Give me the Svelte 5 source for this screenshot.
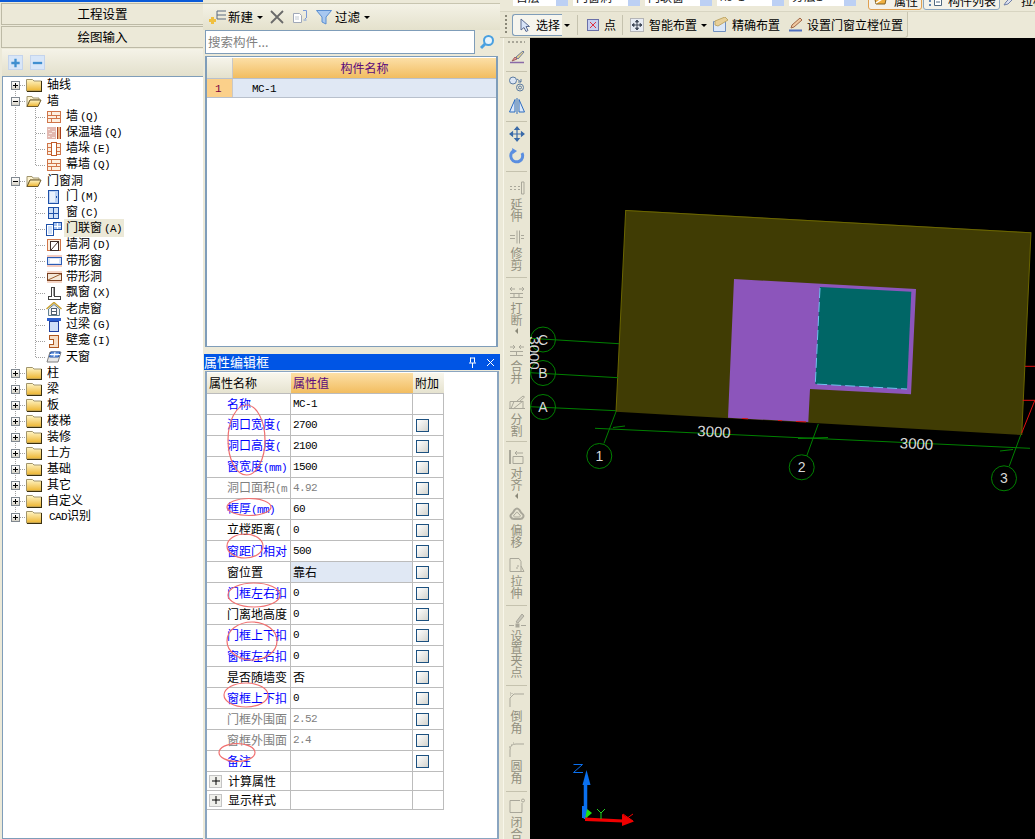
<script>
  const tree = [
    { label: '轴线', box: '+' },
    { label: '墙', box: '-', open: true },
    { label: '墙(Q)', icon: 'brick' },
    { label: '保温墙(Q)', icon: 'insul' },
    { label: '墙垛(E)', icon: 'pier' },
    { label: '幕墙(Q)', icon: 'brick' },
    { label: '门窗洞', box: '-', open: true },
    { label: '门(M)', icon: 'door' },
    { label: '窗(C)', icon: 'window' },
    { label: '门联窗(A)', icon: 'doorwin', active: true },
    { label: '墙洞(D)', icon: 'hole' },
    { label: '带形窗', icon: 'band' },
    { label: '带形洞', icon: 'bandhole' },
    { label: '飘窗(X)', icon: 'bay' },
    { label: '老虎窗', icon: 'dormer' },
    { label: '过梁(G)', icon: 'lintel' },
    { label: '壁龛(I)', icon: 'niche' },
    { label: '天窗', icon: 'sky' },
    { label: '柱', box: '+' },
    { label: '梁', box: '+' },
    { label: '板', box: '+' },
    { label: '楼梯', box: '+' },
    { label: '装修', box: '+' },
    { label: '土方', box: '+' },
    { label: '基础', box: '+' },
    { label: '其它', box: '+' },
    { label: '自定义', box: '+' },
    { label: 'CAD识别', box: '+' }
  ];

  const props = [
    { name: '名称', value: 'MC-1', kind: 'blue', nocheck: true },
    { name: '洞口宽度(', value: '2700', kind: 'blue' },
    { name: '洞口高度(', value: '2100', kind: 'blue' },
    { name: '窗宽度(mm)', value: '1500', kind: 'blue' },
    { name: '洞口面积(m', value: '4.92', kind: 'gray' },
    { name: '框厚(mm)', value: '60', kind: 'blue' },
    { name: '立樘距离(', value: '0', kind: 'black' },
    { name: '窗距门相对', value: '500', kind: 'blue' },
    { name: '窗位置', value: '靠右', kind: 'black', picked: true },
    { name: '门框左右扣', value: '0', kind: 'blue' },
    { name: '门离地高度', value: '0', kind: 'black' },
    { name: '门框上下扣', value: '0', kind: 'blue' },
    { name: '窗框左右扣', value: '0', kind: 'blue' },
    { name: '是否随墙变', value: '否', kind: 'black' },
    { name: '窗框上下扣', value: '0', kind: 'blue' },
    { name: '门框外围面', value: '2.52', kind: 'gray' },
    { name: '窗框外围面', value: '2.4', kind: 'gray' },
    { name: '备注', value: '', kind: 'blue' }
  ];

  const sideTools = [
    { icon: 'brush', h: 21 },
    { sep: true },
    { icon: 'circles', h: 24, pt: 3 },
    { icon: 'mirror', h: 23, pt: 1 },
    { sep: true },
    { icon: 'move', h: 23, pt: 3 },
    { icon: 'rotate', h: 24, pt: 2 },
    { sep: true },
    { icon: 'extend', text: '延伸', h: 56, pt: 7 },
    { icon: 'trim', text: '修剪', h: 47 },
    { sep: true },
    { icon: 'break', text: '打断', h: 63, pt: 5, more: true },
    { icon: 'merge', text: '合并', h: 53 },
    { icon: 'split', text: '分割', h: 45 },
    { sep: true },
    { icon: 'align', text: '对齐', h: 63, pt: 6, more: true },
    { icon: 'offset', text: '偏移', h: 51 },
    { icon: 'stretch', text: '拉伸', h: 47 },
    { sep: true },
    { icon: 'grip', text: '设置夹点', h: 77, pt: 5 },
    { sep: true },
    { icon: 'chamfer', text: '倒角', h: 55, pt: 5 },
    { icon: 'fillet', text: '圆角', h: 48 },
    { sep: true },
    { icon: 'close', text: '闭合', h: 46, pt: 5 }
  ];

  const marks = [
    [246.5, 440, 18.5, 35],
    [249, 507, 22, 8.5],
    [245, 546, 18, 12],
    [254, 595, 26, 12],
    [252, 641, 25, 19],
    [246, 695, 22, 12],
    [237, 752.5, 18, 9]
  ];

  const bubbles = [
    ['C', 543, 339.5], ['B', 543, 373], ['A', 543, 407],
    ['1', 599.3, 456], ['2', 801.7, 467.3], ['3', 1004, 478.3]
  ];

  const grid = [
    [530, 338.3, 619, 343.7], [530, 372.7, 618, 377.7], [530, 406.7, 616, 410.7],
    [616, 411.7, 604, 443.3], [818.3, 424, 806.7, 456], [1020.7, 435, 1009.3, 466],
    [595, 428.3, 1030, 448.3], [613, 427.5, 625, 426], [798, 438.5, 828, 437.5], [1000, 451, 1013, 449.5]
  ];

  const combos = ['首层', '门窗洞', '门联窗', 'MC-1', '分层1'];

  // split a label so that latin runs get the narrow mono face
  function runs(text) {
    return text.match(/[\x00-\x7f]+|[^\x00-\x7f]+/g) || [];
  }
  const isLatin = (r) => r.charCodeAt(0) < 128;
</script>

{#snippet txt(text)}{#each runs(text) as r}{#if isLatin(r)}<span class="lat">{r}</span>{:else}{r}{/if}{/each}{/snippet}

{#snippet folder(open)}
  <svg class="ti" width="16" height="14" viewBox="0 0 16 14">
    <defs><linearGradient id="fld" x1="0" y1="0" x2="0" y2="1"><stop offset="0" stop-color="#fff6c8" /><stop offset="1" stop-color="#edb42e" /></linearGradient></defs>
    {#if open}
      <path d="M1 2.500h5l1 1.500h6v2H4L1 12.500z" fill="#fdf3cf" stroke="#a0946c" />
      <path d="M1 12.500L4 6h11l-3 6.500z" fill="url(#fld)" stroke="#6e5a28" />
    {:else}
      <path d="M.5 3V1.500h6L8 3h7.500v10H.5z" fill="url(#fld)" stroke="#a0946c" />
      <path d="M1 13.500h15M15.500 3v10.500" stroke="#3a3010" />
    {/if}
  </svg>
{/snippet}

{#snippet treeIcon(k)}
  <svg class="ti" width="16" height="14" viewBox="0 0 16 14" shape-rendering="crispEdges">
    {#if k === 'brick'}
      <rect x="1.500" y="1.500" width="13" height="11" fill="#fdf0e0" stroke="#d0764a" />
      <path d="M1 5h14M1 8.500h14M5.500 1v4M10.500 5v3.500M5.500 8.500v4" stroke="#d0764a" />
    {:else if k === 'insul'}
      <rect x="1" y="1" width="9" height="12" fill="#e2b8b0" />
      <path d="M2 3h2M6 5h3M3 7h3M2 10h2M6 11h3" stroke="#f6e8e0" />
      <path d="M11.500 1v12M14.500 1v12" stroke="#a8401c" /><rect x="12" y="1" width="2" height="12" fill="#e8b080" />
    {:else if k === 'pier'}
      <rect x="1.500" y="1.500" width="13" height="11" fill="#fdf0e0" stroke="#d0764a" />
      <rect x="5.500" y="0.500" width="5" height="13" fill="#fff" stroke="#c05a28" />
      <path d="M1 5h4M1 9h4M11 5h4M11 9h4" stroke="#d0764a" />
    {:else if k === 'door'}
      <rect x="2.500" y="0.500" width="10" height="13" fill="#bcd2f4" stroke="#1e50a8" />
      <rect x="4" y="2" width="5" height="10" fill="#e8f0fc" /><rect x="10" y="6" width="1" height="2" fill="#1e50a8" />
    {:else if k === 'window'}
      <rect x="2.500" y="1.500" width="10" height="11" fill="#cfe0f8" stroke="#1e50a8" />
      <path d="M7.500 1v11M2 7.500h11" stroke="#1e50a8" />
    {:else if k === 'doorwin'}
      <rect x="0.500" y="2.500" width="7" height="11" fill="#fff" stroke="#1e50a8" />
      <rect x="2" y="4" width="4" height="8" fill="#cfe0f8" />
      <rect x="7.500" y="0.500" width="8" height="7" fill="#a8c4f0" stroke="#1e50a8" />
      <path d="M11.500 1v6M8 4h7" stroke="#fff" />
    {:else if k === 'hole'}
      <rect x="1.500" y="1.500" width="13" height="11" fill="#fdf0e0" stroke="#d0764a" />
      <rect x="4.500" y="3.500" width="8" height="9" fill="#fff" stroke="#40302a" />
      <path d="M5 12l7-8" stroke="#40302a" shape-rendering="auto" />
    {:else if k === 'band'}
      <rect x="1" y="1" width="15" height="12" fill="#f4ccc0" />
      <rect x="1.500" y="3.500" width="14" height="7" fill="#d8e4f8" stroke="#2c5cb4" />
      <rect x="4" y="5" width="9" height="4" fill="#fff" />
    {:else if k === 'bandhole'}
      <rect x="1" y="1" width="15" height="12" fill="#f4d4c4" />
      <rect x="1.500" y="3.500" width="14" height="7" fill="#f4e8d8" stroke="#7a4020" />
      <path d="M2 10l13-6" stroke="#a06030" shape-rendering="auto" />
    {:else if k === 'bay'}
      <path d="M5.500 1h3v9h6v3.500H2.500V10h3z" fill="#fff" stroke="#404040" />
      <path d="M7 2v8" stroke="#a0a0a0" />
    {:else if k === 'dormer'}
      <g shape-rendering="auto">
        <path d="M.5 7L8 .5 15.500 7" fill="none" stroke="#c8a030" stroke-width="1.500" />
        <path d="M2.500 7L8 2.500 13.500 7v6.500h-11z" fill="#f0f0f0" stroke="#608090" />
      </g>
      <rect x="5.500" y="6.500" width="5" height="6" fill="#fff" stroke="#506070" />
      <path d="M5 9.500h6" stroke="#506070" />
    {:else if k === 'lintel'}
      <rect x="1" y="0" width="14" height="3" fill="#2c60d0" />
      <rect x="3.500" y="3.500" width="9" height="10" fill="#d0e0f8" stroke="#2040a0" />
    {:else if k === 'niche'}
      <path d="M3 1.500h9.500v12H3V10h4V5H3z" fill="#f8e0c8" stroke="#b05820" />
    {:else}
      <g shape-rendering="auto">
        <path d="M4 2h11l-3 10H1z" fill="#e8e8e8" stroke="#808080" />
        <path d="M5 2h9l-1.500 5H3.500z" fill="#7ea8e8" stroke="#1e50a8" />
        <path d="M9 2l-1 5M4 4.500h10" stroke="#fff" />
      </g>
    {/if}
  </svg>
{/snippet}

{#snippet sideIcon(k)}
  <svg width="18" height="16" viewBox="0 0 18 16" fill="none" stroke="#a9a79a">
    {#if k === 'brush'}
      <path d="M2 13.500h14" stroke="#8a6aa8" stroke-width="1.500" />
      <path d="M4 12l3-4 2 2z" fill="#e8a0a0" stroke="#a06060" />
      <path d="M8 8l7-6 1 1-6 7z" fill="#e8d088" stroke="#6e7ea0" />
    {:else if k === 'circles'}
      <circle cx="5" cy="4.500" r="3.500" fill="#dce6f4" stroke="#5a7aa0" />
      <circle cx="12" cy="11.500" r="3.500" stroke="#5a7aa0" /><circle cx="12" cy="11.500" r="1.500" stroke="#5a7aa0" />
      <path d="M9 3l4 3M13 3v3h-3" stroke="#5a7aa0" />
    {:else if k === 'mirror'}
      <path d="M7 1.500L1.500 14H7zM11 1.500L16.500 14H11z" fill="#dce8f8" stroke="#2c6cc0" />
      <path d="M9 0v16" stroke="#2c6cc0" />
    {:else if k === 'move'}
      <path d="M9 1v14M2 8h14M9 1L7 3.500h4zM9 15l-2-2.500h4zM2 8l2.500-2v4zM16 8l-2.500-2v4z" fill="#5a86c0" stroke="#3a6aa8" stroke-width="1.200" />
    {:else if k === 'rotate'}
      <path d="M6 2.500A6 6 0 1 0 14 5" stroke="#5a8ee0" stroke-width="3" />
      <path d="M4 0l5 3-4 3z" fill="#5a8ee0" stroke="none" />
    {:else if k === 'extend'}
      <path d="M2 6.500h2M2 9.500h2M6 6.500h2M6 9.500h2M10 6.500h2M10 9.500h2M13.500 2v12h2.500V2z" />
    {:else if k === 'trim'}
      <path d="M2 6.500h5M2 9.500h5M9 1.500v13M11.500 1.500v13M13 6.500h3M13 9.500h3" />
    {:else if k === 'break'}
      <path d="M2 9.500h13M2 13.500h13M6 9.500v4M11 9.500v4M2 5h5M2 5l2-2M2 5l2 2M16 5h-5M16 5l-2-2M16 5l-2 2" />
    {:else if k === 'merge'}
      <path d="M2 9.500h13M2 13.500h13M8.500 9.500v4M2 5h5M7 5L5 3M7 5L5 7M16 5h-5M11 5l2-2M11 5l2 2" />
    {:else if k === 'split'}
      <path d="M1 13.500h16M2 6.500v7M2 6.500h13M6 6.500l-3 7M15 14V6l-10 8M9 6l6-5 1.500 1-5.500 5" />
    {:else if k === 'align'}
      <path d="M2 1v14" stroke-width="2" /><path d="M5 7.500h10v7H5zM7 4h8M7 4l2-2M7 4l2 2" />
    {:else if k === 'offset'}
      <path d="M9 2.500c3 0 3 4 5 5 3 2 1 5.500-2 5.500H6c-3 0-5-3.500-2-5.500 2-1 2-5 5-5z" stroke-width="2" />
      <path d="M9 6c1 0 1 2 3 3 1 1 0 2-1 2H7c-1 0-2-1-1-2 2-1 2-3 3-3z" />
    {:else if k === 'stretch'}
      <path d="M2 1.500h9l2 3v10H2zM13 9l3 5.500h-3M10 8v2M8 11h2" />
    {:else if k === 'grip'}
      <rect x="8" y="12" width="3" height="3" fill="#a9a79a" /><path d="M1 13.500h5M13 13.500h5" />
      <path d="M8 10l6-8 2 2-6 7z" fill="#c8c6ba" />
    {:else if k === 'chamfer'}
      <path d="M2 15V6l4-4h10" /><path d="M2 3h1M4 1v1M2 1h1" stroke-dasharray="1 1" />
    {:else if k === 'fillet'}
      <path d="M2 15V8q0-6 6-6h8" /><path d="M1 5h1M3 3h1M5 1h1" />
    {:else}
      <path d="M14 5v9.500H2v-12h10" /><circle cx="15" cy="2.500" r="1.500" />
    {/if}
  </svg>
{/snippet}

{#snippet arrow()}<i class="caret"></i>{/snippet}

<div class="app">
  <aside class="left">
    <div class="nav-btn">工程设置</div>
    <div class="nav-btn">绘图输入</div>
    <div class="tree-bar">
      <span class="tb-sq"><svg width="14" height="14" viewBox="0 0 14 14"><path d="M7 2.500v9M2.500 7h9" stroke="#3f8fd0" stroke-width="2.500" /></svg></span>
      <span class="tb-sq"><svg width="14" height="14" viewBox="0 0 14 14"><path d="M2 7h10" stroke="#3f8fd0" stroke-width="2.500" /></svg></span>
    </div>
    <div class="tree">
      <svg class="guides" width="100" height="460" viewBox="0 0 100 460">
        <g stroke="#a0a0a0" stroke-dasharray="1 1" fill="none">
          <path d="M15.500 9v432" />
          <path d="M35.500 30v60M35.500 110v172" />
          {#each tree as item, i}
            {#if item.icon}
              <path d="M36 {i * 16 + 9.500}h10" />
            {:else}
              <path d="M20 {i * 16 + 9.500}h6" />
            {/if}
          {/each}
        </g>
      </svg>
      {#each tree as item}
        <div class="row" class:leaf={item.icon}>
          {#if item.box}
            <span class="box">
              <svg width="7" height="7" viewBox="0 0 7 7"><path d={item.box === '+' ? 'M1 3.500h5M3.500 1v5' : 'M1 3.500h5'} stroke="#000" /></svg>
            </span>
            {@render folder(item.open)}
          {:else}
            {@render treeIcon(item.icon)}
          {/if}
          <span class="lbl" class:active={item.active}>{@render txt(item.label)}</span>
        </div>
      {/each}
    </div>
  </aside>

  <section class="mid">
    <div class="mid-bar">
      <svg width="18" height="18" viewBox="0 0 18 18" fill="none">
        <path d="M8 3h9M8 7h9M8 11h9M8 3v8" stroke="#5a6a80" />
        <path d="M3.500 9v7M0 12.500h7" stroke="#f0c040" stroke-width="3" />
      </svg>
      <span class="mb-t">新建</span>{@render arrow()}
      <svg class="x" width="14" height="14" viewBox="0 0 14 14"><path d="M1 1l12 12M13 1L1 13" stroke="#6a6a6a" stroke-width="1.800" /></svg>
      <svg class="cp" width="16" height="16" viewBox="0 0 16 16" fill="none">
        <path d="M1.500 4.500h6l2 2v7h-8z" fill="#fff" stroke="#a0a8b8" /><path d="M3 8h4M3 10h4" stroke="#c0c8d0" />
        <path d="M11 1.500h3.500v7M15 8l-2 2M14.500 11h-3" stroke="#7a9ad8" />
      </svg>
      <svg class="ft" width="16" height="16" viewBox="0 0 16 16"><path d="M.5 1.500h15L10 8v7l-4-2V8z" fill="#a8c8f0" stroke="#5a8ed0" /></svg>
      <span class="mb-t">过滤</span>{@render arrow()}
    </div>
    <div class="search-row">
      <div class="search">搜索构件...</div>
      <svg width="16" height="16" viewBox="0 0 16 16" fill="none">
        <circle cx="9.500" cy="6.500" r="4.500" fill="#e8f4fc" stroke="#4aa0e0" stroke-width="2" />
        <path d="M6 10l-4 4" stroke="#4aa0e0" stroke-width="3" />
      </svg>
    </div>
    <div class="list">
      <div class="list-head">
        <div class="corner"></div>
        <div class="head-name">构件名称</div>
      </div>
      <div class="list-row">
        <div class="num"><span class="lat">1</span></div>
        <div class="name"><span class="lat">MC-1</span></div>
      </div>
    </div>
    <div class="title-bar">
      <span class="title-t">属性编辑框</span>
      <svg width="9" height="11" viewBox="0 0 9 11"><path d="M2.500.5v5M6.500.5v5M1 6h7M4.500 6v5M2.500 1h4" stroke="#fff" /></svg>
      <svg width="9" height="9" viewBox="0 0 9 9"><path d="M1 1l7 7M8 1L1 8" stroke="#fff" /></svg>
    </div>
    <div class="props">
      <div class="pgrid">
        <div class="pr head">
          <div class="c1 th">属性名称</div>
          <div class="c2 th hot">属性值</div>
          <div class="c3 th">附加</div>
        </div>
        {#each props as p}
          <div class="pr">
            <div class="c1 {p.kind}"><span class="nm">{@render txt(p.name)}</span></div>
            <div class="c2 val {p.kind === 'gray' ? 'gray' : ''}" class:picked={p.picked}>{@render txt(p.value)}</div>
            <div class="c3">{#if !p.nocheck}<i class="chk"></i>{/if}</div>
          </div>
        {/each}
        {#each ['计算属性', '显示样式'] as g}
          <div class="pr grp">
            <div class="c1"><i class="plus"><svg width="8" height="8" viewBox="0 0 8 8"><path d="M0 4h8M4 0v8" stroke="#000" /></svg></i>{g}</div>
            <div class="c2"></div>
            <div class="c3"></div>
          </div>
        {/each}
      </div>
    </div>
    <svg class="marks" width="1035" height="839" viewBox="0 0 1035 839">
      {#each marks as [cx, cy, rx, ry]}
        <ellipse {cx} {cy} {rx} {ry} fill="none" stroke="#f07070" stroke-width="1.200" />
      {/each}
    </svg>
  </section>

  <section class="right">
    <div class="combo-bar">
      {#each combos as c}
        <div class="combo"><span class="cv">{@render txt(c)}</span><i class="drop"></i></div>
      {/each}
      <div class="tab on">
        <svg class="tab-ic" width="16" height="12" viewBox="0 0 16 12"><path d="M1 0h13l-2 9H3z" fill="#f0b040" stroke="#806020" /><path d="M3 8l9-6" stroke="#fff" stroke-width="1.500" /></svg>
        属性
      </div>
      <div class="tab">
        <svg class="tab-ic" width="15" height="10" viewBox="0 0 15 10"><path d="M1 1h2M1 5h2M1 9h2" stroke="#3060a0" stroke-width="1.500" /><path d="M6.500 0v9.500h7V0M8 3h4M8 6h4" fill="#fff" stroke="#506880" /></svg>
        构件列表
      </div>
      <div class="tab plain">
        <svg width="11" height="10" viewBox="0 0 11 10"><path d="M1 9l2-3 6-6 2 2-6 6z" fill="#dce0f0" stroke="#7080a8" /></svg>
        <span>拉框</span>
      </div>
    </div>
    <div class="cmd-bar">
      <i class="grips"></i>
      <div class="sel">
        <svg width="10" height="14" viewBox="0 0 10 14"><path d="M1 1v11l3-2.500 2 4 2-1-2-4h3.500z" fill="#d8e4f8" stroke="#5a6a90" /></svg>
        <span>选择</span>
      </div>
      {@render arrow()}
      <i class="vsep s1"></i>
      <svg width="12" height="12" viewBox="0 0 12 12"><rect x=".5" y=".5" width="11" height="11" fill="#c8d0f0" stroke="#6a70a8" /><path d="M3 3l6 6M9 3l-6 6" stroke="#e03040" /></svg>
      <span class="cb-t pt">点</span>
      <i class="vsep s2"></i>
      <svg width="14" height="14" viewBox="0 0 14 14"><rect x=".5" y=".5" width="13" height="13" fill="#e8ecf4" stroke="#80808a" stroke-dasharray="1 1" /><path d="M7 2v10M2 7h10M7 2L5.500 4h3zM7 12l-1.500-2h3zM2 7l2-1.500v3zM12 7l-2-1.500v3z" stroke="#404858" fill="#404858" /></svg>
      <span class="cb-t t1">智能布置</span>{@render arrow()}
      <svg class="ic2" width="16" height="15" viewBox="0 0 16 15"><path d="M.5 4.500h12v10H.5z" fill="#dce8f8" stroke="#7090c0" /><path d="M2 4l10-4 3 3-10 6-3-1z" fill="#e8d098" stroke="#c0a868" /></svg>
      <span class="cb-t t2">精确布置</span>
      <svg class="ic3" width="15" height="15" viewBox="0 0 15 15"><path d="M1 13.500h13" stroke="#5070c0" stroke-width="2" /><path d="M3 11l1-3 8-7 2 2-8 7z" fill="#f0c8a0" stroke="#a06848" /></svg>
      <span class="cb-t t3">设置门窗立樘位置</span>
    </div>
    <div class="work">
      <div class="side">
        <i class="side-grip"></i>
        {#each sideTools as t}
          {#if t.sep}
            <div class="side-sep"></div>
          {:else}
            <div class="tool" style="height:{t.h}px;padding-top:{t.pt || 0}px">
              {@render sideIcon(t.icon)}
              {#if t.text}
                <div class="vt">{#each t.text.split('') as ch}<span>{ch}</span>{/each}</div>
              {/if}
              {#if t.more}<i class="more"></i>{/if}
            </div>
          {/if}
        {/each}
      </div>
      <svg class="canvas" viewBox="530 38 505 801" width="505" height="801">
        <polygon points="625.700,210 1031,232.300 1021.700,435 616,411.700" fill="#403c04" />
        <path d="M625.700 210.500L1031 232.800M1031 232.300L1021.700 435M625.700 210L616 411.700" stroke="#6b6600" fill="none" />
        <polygon points="734,279 916,289 911,394.300 810,389 808.300,422 728,417.700" fill="#8c55bb" />
        <polygon points="820,287 911.300,291.700 907,389 815.300,384" fill="#006666" />
        <path d="M820 288L815.300 384L907 389" stroke="#70c0f0" stroke-dasharray="10 4" fill="none" />
        <path d="M742 418.500l6 .3M778 420.500l4 .2M796 421.500l10 .4" stroke="#e01010" />
        <path d="M1025 366.300h10M1022.700 400.300H1035M1035 400l-13.300 33" stroke="#e01010" fill="none" />
        {#each grid as [x1, y1, x2, y2]}
          <line {x1} {y1} {x2} {y2} stroke="#008000" />
        {/each}
        {#each bubbles as [label, x, y]}
          <circle cx={x} cy={y} r="12.500" fill="none" stroke="#008000" />
          <text class="cad" {x} y={y + 5} text-anchor="middle">{label}</text>
        {/each}
        <text class="cad dim" x="714" y="437" text-anchor="middle" transform="rotate(3 714 432)">3000</text>
        <text class="cad dim" x="916.500" y="449" text-anchor="middle" transform="rotate(3 916 444)">3000</text>
        <text class="cad dim" x="534" y="358" text-anchor="middle" transform="rotate(90 534 353)">3000</text>

        <path d="M585.500 819V782" stroke="#0a70f0" stroke-width="3.500" />
        <path d="M584 818v-12" stroke="#0a70f0" stroke-width="4" />
        <path d="M586.500 770l4 15h-8z" fill="#0a70f0" />
        <path d="M573.500 764.500h9l-9 8h9.500" stroke="#0a70f0" fill="none" />
        <path d="M587 809l5 4-7 6z" fill="#20e010" />
        <path d="M585 817.500l38 2 0 3-38-1.500z" fill="#f00000" />
        <path d="M622 814l12 7.500-12 4.500z" fill="#f00000" />
        <path d="M597 809l4 4 4-4M601 813v6" stroke="#20d020" fill="none" />
        <path d="M623 814l10 7M633 814l-10 7" stroke="#f00000" />
      </svg>
    </div>
  </section>
</div>

<style>
  :global(body) {
    margin: 0;
    overflow: hidden;
    background: #ece9d8;
  }
  .app {
    display: flex;
    width: 1035px;
    height: 839px;
    overflow: hidden;
    background: #ece9d8;
    font-family: "Noto Sans CJK SC", "Liberation Sans", sans-serif;
    font-size: 12px;
    line-height: 16px;
    color: #000;
  }
  .lat {
    font-family: "Liberation Mono", monospace;
    font-size: 11px;
    letter-spacing: -0.6px;
  }

  /* left column */
  .left {
    width: 203px;
    flex: none;
    display: flex;
    flex-direction: column;
    padding-top: 3px;
    background: linear-gradient(#0a5ad8 0, #0a5ad8 2px, #ece9d8 2px);
    box-sizing: border-box;
  }
  .nav-btn {
    height: 22px;
    margin: 0 0 1px 1px;
    border: 1px solid #bdbaa6;
    border-width: 1px 0 1px 1px;
    box-sizing: border-box;
    background: #ece9d8;
    text-align: center;
    line-height: 20px;
    font-size: 12.500px;
  }
  .tree-bar {
    height: 27px;
    margin-left: 2px;
    display: flex;
    align-items: center;
    gap: 7px;
    padding-left: 6px;
    background: linear-gradient(#f5f3e8, #e3e0cc);
  }
  .tb-sq {
    width: 15px;
    height: 15px;
    background: #d8e6f8;
    border: 1px solid #c4d4ec;
    box-sizing: border-box;
    display: flex;
  }
  .tree {
    position: relative;
    flex: 1;
    margin-left: 2px;
    border: 1px solid #7f9db9;
    border-right: 0;
    background: #fff;
    box-sizing: border-box;
  }
  .guides {
    position: absolute;
    left: -3px;
    top: -1px;
  }
  .row {
    position: relative;
    height: 16px;
    display: flex;
    align-items: center;
    padding-left: 8px;
  }
  .row.leaf {
    padding-left: 43px;
  }
  .box {
    width: 9px;
    height: 9px;
    border: 1px solid #808890;
    background: linear-gradient(#fff, #d8d4c8);
    display: flex;
    margin-right: 6px;
    flex: none;
    box-sizing: border-box;
  }
  .ti {
    flex: none;
  }
  .lbl {
    margin: 0 0 2px 3px;
    padding: 0 2px;
    line-height: 16px;
    white-space: nowrap;
  }
  .leaf .lbl {
    margin-left: 2px;
  }
  .lbl .lat {
    margin-left: 2px;
  }
  .lbl.active {
    background: #ece9d8;
  }

  /* middle column */
  .mid {
    width: 297px;
    flex: none;
    display: flex;
    flex-direction: column;
    padding-top: 3px;
    box-sizing: border-box;
  }
  .mid-bar {
    height: 27px;
    flex: none;
    display: flex;
    align-items: center;
    padding-left: 6px;
    border-top: 1px solid #c8c5b0;
    box-sizing: border-box;
    background: linear-gradient(#f4f2e6, #e4e1cc);
  }
  .mb-t {
    margin-left: 1px;
    font-size: 12.500px;
  }
  .caret {
    width: 0;
    height: 0;
    margin: 1px 0 0 4px;
    border: 3px solid transparent;
    border-top: 3px solid #000;
    border-bottom: 0;
    flex: none;
  }
  .x {
    margin-left: 7px;
  }
  .cp {
    margin-left: 8px;
  }
  .ft {
    margin: 0 2px 0 8px;
  }
  .search-row {
    height: 24px;
    flex: none;
    display: flex;
    align-items: center;
    gap: 4px;
    padding-left: 2px;
  }
  .search {
    width: 270px;
    height: 24px;
    border: 1px solid #7f9db9;
    background: #fff;
    box-sizing: border-box;
    padding-left: 2px;
    line-height: 21px;
    color: #808080;
    font-size: 12.500px;
  }
  .list {
    height: 291px;
    flex: none;
    margin: 2px 2px 0 2px;
    border: 2px solid #7f9db9;
    border-width: 1px 2px;
    background: #fff;
    padding-top: 1px;
    box-sizing: border-box;
  }
  .list-head {
    height: 21px;
    display: flex;
    border-bottom: 1px solid #b8c0cc;
    box-sizing: border-box;
  }
  .corner {
    width: 26px;
    background: linear-gradient(#f6f4ea, #e4e1cc);
    border-right: 1px solid #c8c8c8;
    box-sizing: border-box;
  }
  .head-name {
    flex: 1;
    text-align: center;
    line-height: 20px;
    color: #5b0a7c;
    background: linear-gradient(#fcdfa6, #f2bd60);
  }
  .list-row {
    height: 19px;
    display: flex;
    border-bottom: 1px solid #b8c0cc;
    box-sizing: border-box;
  }
  .num {
    width: 26px;
    background: #fbd08a;
    border-right: 1px solid #c8c8c8;
    box-sizing: border-box;
    color: #7a0040;
    padding-left: 8px;
  }
  .name {
    flex: 1;
    background: #e0e8f4;
    padding-left: 19px;
  }
  .title-bar {
    height: 16px;
    flex: none;
    margin: 7px 0 0 1px;
    background: #0055e5;
    display: flex;
    align-items: center;
    gap: 9px;
    padding-right: 5px;
    color: #fff;
    font-size: 13px;
  }
  .title-t {
    flex: 1;
  }
  .props {
    flex: 1;
    margin: 1px 1px 0 2px;
    border: 2px solid #8aa5c0;
    border-width: 1px 2px;
    background: #fff;
    padding-top: 1px;
    box-sizing: border-box;
  }
  .pgrid {
    width: 237px;
  }
  .pr {
    height: 21px;
    display: flex;
    border-bottom: 1px solid #bcbcbc;
    box-sizing: border-box;
  }
  .pr.grp {
    height: 19px;
  }
  .c1, .c2, .c3 {
    box-sizing: border-box;
    border-right: 1px solid #bcbcbc;
    white-space: nowrap;
    overflow: hidden;
    display: flex;
    align-items: center;
  }
  .c1 {
    width: 84px;
    padding-left: 20px;
  }
  .c2 {
    width: 122px;
    padding-left: 2px;
  }
  .c3 {
    width: 31px;
    padding-left: 2px;
  }
  .th {
    padding-left: 2px;
    background: linear-gradient(#f9f7ee, #e6e3d0);
    border-right: 0;
  }
  .th.hot {
    background: linear-gradient(#fcdfa6, #f2bd60);
    color: #5b0a7c;
  }
  .blue {
    color: #0000ff;
  }
  .gray {
    color: #808080;
  }
  .black {
    color: #000;
  }
  .picked {
    background: #e0e8f4;
  }
  .chk {
    width: 13px;
    height: 13px;
    border: 1px solid #1c5180;
    background: linear-gradient(135deg, #fff, #d4d4ce);
    box-sizing: border-box;
    display: block;
    margin-left: 1px;
  }
  .plus {
    width: 13px;
    height: 13px;
    margin: 0 6px 0 -18px;
    border: 1px solid #c4c4c4;
    background: #f0f0ec;
    box-sizing: border-box;
    display: flex;
    align-items: center;
    justify-content: center;
    flex: none;
  }
  .marks {
    position: absolute;
    left: 0;
    top: 0;
    pointer-events: none;
  }

  /* right column */
  .right {
    flex: 1;
    min-width: 0;
    display: flex;
    flex-direction: column;
  }
  .combo-bar {
    height: 12px;
    flex: none;
    overflow: hidden;
    display: flex;
    align-items: flex-start;
    gap: 5px;
    padding-left: 13px;
    border-bottom: 1px solid #d8d5c2;
    box-sizing: border-box;
  }
  .combo {
    width: 67px;
    height: 18px;
    margin-top: -12px;
    flex: none;
    background: #fff;
    display: flex;
    align-items: center;
    justify-content: space-between;
    padding-left: 3px;
    box-sizing: border-box;
    color: #222;
  }
  .combo:first-child {
    width: 55px;
  }
  .cv {
    white-space: nowrap;
  }
  .drop {
    width: 12px;
    height: 18px;
    background: #bcd0f4;
    flex: none;
  }
  .tab {
    height: 18px;
    margin: -8px 0 0 -4px;
    flex: none;
    display: flex;
    align-items: center;
    padding: 0 3px 0 4px;
    border: 1px solid #8aa5c0;
    border-radius: 0 0 3px 3px;
    background: #f4f2ea;
    box-sizing: border-box;
    white-space: nowrap;
    line-height: 16px;
    gap: 5px;
  }
  .tab-ic {
    flex: none;
  }
  .tab.on {
    margin-left: 7px;
    border-color: #e0a050;
  }
  .tab.plain {
    margin-left: -2px;
    border: 0;
    background: none;
    padding: 0;
    gap: 7px;
  }
  .cmd-bar {
    width: 408px;
    height: 26px;
    flex: none;
    display: flex;
    align-items: center;
    box-sizing: border-box;
    padding-left: 5px;
    background: #e9e6d4;
    border-right: 1px solid #c8c5b0;
    border-bottom: 1px solid #c8c5b0;
    border-radius: 0 0 3px 0;
  }
  .grips {
    width: 2px;
    height: 20px;
    margin-right: 5px;
    background: repeating-linear-gradient(#8a8878 0 2px, transparent 2px 4px);
    flex: none;
  }
  .sel {
    width: 50px;
    height: 22px;
    box-sizing: border-box;
    border: 1px solid #7f9db9;
    border-right: 0;
    border-radius: 3px 0 0 3px;
    background: #f6f5ee;
    display: flex;
    align-items: center;
    gap: 6px;
    padding-left: 7px;
    flex: none;
    white-space: nowrap;
  }
  .vsep {
    width: 1px;
    height: 20px;
    background: #c5c2ae;
    flex: none;
  }
  .s1 {
    margin: 0 9px 0 7px;
  }
  .s2 {
    margin: 0 7px 0 6px;
  }
  .cmd-bar > .caret {
    margin-left: 2px;
  }
  .cmd-bar > .t1 + .caret {
    margin-left: 4px;
  }
  .cb-t {
    white-space: nowrap;
  }
  .pt {
    margin-left: 5px;
  }
  .t1 {
    margin-left: 5px;
  }
  .t2 {
    margin-left: 3px;
  }
  .t3 {
    margin-left: 4px;
  }
  .ic2 {
    margin-left: 6px;
    flex: none;
  }
  .ic3 {
    margin-left: 8px;
    flex: none;
  }
  .work {
    flex: 1;
    display: flex;
    min-height: 0;
  }
  .side {
    width: 30px;
    flex: none;
    box-sizing: border-box;
    border-left: 3px solid #ece9d8;
    background: #e9e6d4;
    display: flex;
    flex-direction: column;
    overflow: hidden;
    box-shadow: inset 1px 0 0 #f8f6ea;
  }
  .side-grip {
    height: 8px;
    flex: none;
    margin: 3px 5px 0;
    box-sizing: border-box;
    background: repeating-linear-gradient(90deg, #a8a698 0 2px, transparent 2px 4px) top / 100% 2px no-repeat;
  }
  .side-sep {
    height: 3px;
    flex: none;
    margin: 0 3px;
    background: linear-gradient(#e9e6d4 1px, #c5c2ae 1px, #c5c2ae 2px, #e9e6d4 2px);
  }
  .tool {
    flex: none;
    display: flex;
    flex-direction: column;
    align-items: center;
    box-sizing: border-box;
  }
  .tool svg {
    flex: none;
  }
  .vt {
    margin-top: 2px;
    display: flex;
    flex-direction: column;
    color: #92907f;
    line-height: 12px;
    font-size: 12px;
  }
  .more {
    width: 0;
    height: 0;
    margin-top: 2px;
    border: 3px solid transparent;
    border-right: 3px solid #8a8878;
    border-left: 0;
    flex: none;
  }
  .canvas {
    flex: none;
    background: #000;
    display: block;
  }
  .cad {
    font-family: "Liberation Sans", sans-serif;
    font-size: 14px;
    fill: #d8d8d8;
  }
  .cad.dim {
    font-size: 15px;
  }
</style>
